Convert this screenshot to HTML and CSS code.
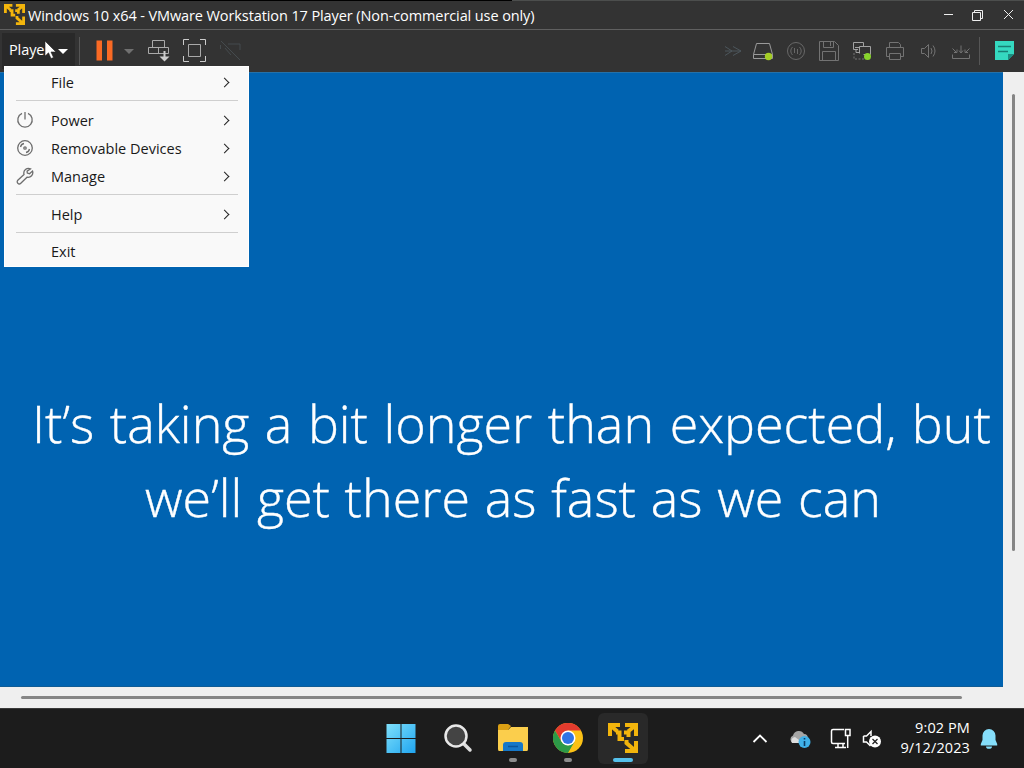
FILE: index.html
```
<!DOCTYPE html>
<html lang="en">

<head>
    <meta charset="UTF-8">
    <title>Windows 10 x64 - VMware Workstation 17 Player</title>
    <link rel="stylesheet" href="styles.css">
</head>

<body>
    <!-- shared logo -->
    <svg class="defs" width="0" height="0">
        <symbol id="vmware" viewBox="0 0 30 30">
            <g fill="none" stroke="#f3b50c" stroke-width="4">
                <path d="M2 13V2H12M2.500 2.500 9.500 8.500"/>
                <path d="M17 2H28V13M27.500 2.500 20 8.500"/>
                <path d="M8 9.500H13.500M11.500 9V16H16M16 9.500H22M20.500 9V14"/>
                <path d="M17 28H28V18M18.500 17V20L27 27.500"/>
            </g>
        </symbol>
    </svg>

    <div class="titlebar">
        <svg class="logo" width="21" height="21"><use href="#vmware"/></svg>
        <div class="title">Windows 10 x64 - VMware Workstation 17 Player (Non-commercial use only)</div>
        <svg class="win-btns" width="76" height="20" viewBox="0 0 76 20" fill="none" stroke="#eee">
            <path d="M4 9.500h9"/>
            <path d="M32.500 7.500h8v8h-8zM34.500 7V5.500h8v8H41"/>
            <path d="M64 5l9 9M73 5l-9 9"/>
        </svg>
    </div>

    <div class="toolbar">
        <div class="player"><span>Player</span><i class="caret"></i></div>
        <div class="sep"></div>
        <svg class="icon pause" viewBox="0 0 24 24"><path d="M4.500 1.500h5.500v20H4.500zM15 1.500h5.500v20h-5.500z" fill="#fa6a24"/></svg>
        <i class="caret dim"></i>
        <svg class="icon" viewBox="0 0 24 24" fill="none" stroke="#aaa">
            <path d="M5.500 8V1.500h12V8M1.500 8.500h20v6h-20zM11.500 8.500v6"/>
            <path d="M17.500 12v7" stroke="#ccc" stroke-width="2"/>
            <path d="M12.500 17.500h10l-5 5z" fill="#ccc" stroke="none"/>
        </svg>
        <svg class="icon" viewBox="0 0 24 24" fill="none" stroke="#ccc">
            <path d="M.5 6V.5H6M17 .5h5.500V6M22.500 17v5.500H17M6 22.500H.5V17"/>
            <path d="M5.500 5.500h12v12h-12z" stroke="#aaa"/>
        </svg>
        <svg class="icon" viewBox="0 0 24 24" fill="none" stroke="#454b4e">
            <path d="M2 2l19 19M1.500 6v4M9 5h12v6M6 9l6 7"/>
        </svg>

        <div class="devices">
            <svg class="icon" viewBox="0 0 24 24" fill="none" stroke="#4c565c">
                <path d="M4 7.500l7 4.500-7 4.500M12 7.500l8 4.500-8 4.500M4 12h16"/>
            </svg>
            <svg class="icon" viewBox="0 0 24 24" fill="none" stroke="#999">
                <path d="M5.500 4.500h13l3 11v4H2.500v-4zM2.500 15.500h19"/>
                <circle cx="17.500" cy="17.500" r="3.700" fill="#a4cd25" stroke="none"/>
            </svg>
            <svg class="icon" viewBox="0 0 24 24" fill="none" stroke="#686868">
                <circle cx="12" cy="12" r="8.500"/>
                <path d="M8.500 16a5.500 5.500 0 0 1 0-8M15.500 8a5.500 5.500 0 0 1 0 8M10.500 9v5M13.500 10v5"/>
            </svg>
            <svg class="icon" viewBox="0 0 24 24" fill="none" stroke="#737373">
                <path d="M2.500 2.500h15l4 4v15h-19zM6.500 2.500v6h10v-6M5.500 21.500v-9h13v9M13.500 3v4"/>
            </svg>
            <svg class="icon" viewBox="0 0 24 24" fill="none" stroke="#a2a2a2">
                <path d="M3.500 3.500h10v4M8 10.500H3.500v-7M9.500 14.500v-7h11v8h-7M5 8.500h5M6 10.500v3h3"/>
                <path d="M4 14v6h10" stroke="#777" stroke-dasharray="2 1.500"/>
                <circle cx="17.500" cy="17.500" r="3.500" fill="#87d32c" stroke="none"/>
            </svg>
            <svg class="icon" viewBox="0 0 24 24" fill="none" stroke="#737373">
                <path d="M6.500 8.500v-5h9l2 2v3M6.500 17.500h-3v-9h17v9h-3M6.500 14.500h11v6h-11z"/>
            </svg>
            <svg class="icon" viewBox="0 0 24 24" fill="none" stroke="#737373">
                <path d="M5.500 9.500h3l4-4v13l-4-4h-3zM15 9q2 3 0 6M17 6.500q4 5.500 0 11"/>
            </svg>
            <svg class="icon" viewBox="0 0 24 24" fill="none" stroke="#737373">
                <path d="M3.500 15.500v4h17v-4M3.500 9.500l4 4M5 13.500h3v-3M12 6.500v7M10 11.500l2 2.500 2-2.500M20.500 9.500l-4 4M16 10.500v3h3"/>
            </svg>
            <div class="sep"></div>
            <svg class="icon note" viewBox="0 0 24 24">
                <path d="M3 2h19v13l-6 6H3z" fill="#35d9c0"/>
                <path d="M6 7.500h13M6 12.500h10" stroke="#187f74" stroke-width="1.500"/>
                <path d="M16 21v-6h6z" fill="#1c8c80"/>
            </svg>
        </div>
    </div>

    <div class="viewport">
        <div class="screen">
            <p class="line1">It’s taking a bit longer than expected, but</p>
            <p class="line2">we’ll get there as fast as we can</p>
        </div>
        <div class="vscroll"><div class="thumb"></div></div>
        <div class="hscroll"><div class="thumb"></div></div>
    </div>

    <div class="menu">
        <div class="item"><span>File</span><i class="arrow"></i></div>
        <hr>
        <div class="item">
            <svg viewBox="0 0 18 18"><path d="M6 2.300a7.200 7.200 0 1 0 6 0M9 1v7.500"/></svg>
            <span>Power</span><i class="arrow"></i>
        </div>
        <div class="item">
            <svg viewBox="0 0 18 18"><circle cx="9" cy="9" r="7.300"/><circle cx="9" cy="9" r="1.200"/><path d="M4.500 8A4.500 4.500 0 0 1 8 4.500M13.500 10a4.500 4.500 0 0 1-3.500 3.500"/></svg>
            <span>Removable Devices</span><i class="arrow"></i>
        </div>
        <div class="item">
            <svg viewBox="0 0 18 18"><path d="M14.500 1.800A4.800 4.800 0 0 0 8 7.500L1.800 13.300a2 2 0 0 0 3 3L11 10.200A4.700 4.700 0 0 0 16.500 4l-3 2.700-2.200-.6-.2-2z"/></svg>
            <span>Manage</span><i class="arrow"></i>
        </div>
        <hr>
        <div class="item"><span>Help</span><i class="arrow"></i></div>
        <hr>
        <div class="item last"><span>Exit</span></div>
    </div>

    <svg class="cursor" width="14" height="20" viewBox="0 0 14 20"><path d="M1 1v15l3.500-3.200 2.500 5.700 2.500-1-2.500-5.500h5z" fill="#fff" stroke="#222" stroke-width=".6"/></svg>

    <div class="taskbar">
        <div class="apps">
            <div class="app start">
                <svg width="30" height="30" viewBox="0 0 30 30">
                    <defs><linearGradient id="win" x2="1" y2="1"><stop stop-color="#7fe0fb"/><stop offset="1" stop-color="#1fa5f0"/></linearGradient></defs>
                    <path d="M.5 1h14v14H.5zM15.500 1h14v14H15.500zM.5 16h14v14H.5zM15.500 16h14v14H15.500z" fill="url(#win)"/>
                </svg>
            </div>
            <div class="app">
                <svg width="30" height="30" viewBox="0 0 30 30">
                    <path d="M20 20l7 7" stroke="#ddd" stroke-width="3.500" stroke-linecap="round"/>
                    <circle cx="13" cy="13" r="10.500" fill="#444" stroke="#e8e8e8" stroke-width="2.500"/>
                </svg>
            </div>
            <div class="app open">
                <svg width="30" height="30" viewBox="0 0 30 30">
                    <path d="M0 3q0-2 2-2h8l3 2-3 4H0z" fill="#dba014"/>
                    <path d="M0 7h10l3-3h17v22q0 2-1 2H1q-1 0-1-2z" fill="#fbce4c"/>
                    <path d="M5 28v-6q0-3 3-3h14q3 0 3 3v6z" fill="#1678c8"/>
                    <path d="M10 23.500h10" stroke="#0b559b" stroke-width="1.500"/>
                </svg>
            </div>
            <div class="app open">
                <svg width="30" height="30" viewBox="0 0 30 30">
                    <circle cx="15" cy="15" r="15" fill="#fbc116"/>
                    <path d="M2 7.500A15 15 0 0 1 28 7.500H15L8.500 18.700z" fill="#e33b2e"/>
                    <path d="M2 7.500 8.500 18.700 15 22.500 21.500 18.700 15 30A15 15 0 0 1 2 7.500z" fill="#2c9a48"/>
                    <circle cx="15" cy="15" r="7.500" fill="#fff"/>
                    <circle cx="15" cy="15" r="6" fill="#2f74e6"/>
                </svg>
            </div>
            <div class="app active">
                <svg width="30" height="30"><use href="#vmware"/></svg>
            </div>
        </div>

        <div class="tray">
            <svg width="16" height="10" viewBox="0 0 16 10" fill="none" stroke="#fff" stroke-width="1.800"><path d="M1.500 8 8 1.500 14.500 8"/></svg>
            <svg class="cloud" width="22" height="20" viewBox="0 0 22 20">
                <path d="M4 14a4 4 0 0 1 0-7.500A6 6 0 0 1 15 5q4 0 4 5l-3 4z" fill="#a5a5a5"/>
                <path d="M3 14q-2-5 3-6l8 6z" fill="#ddd"/>
                <circle cx="15.500" cy="13" r="6" fill="#3fb0e8"/>
                <path d="M15.500 9v1.500M15.500 12v5" stroke="#0c3c66" stroke-width="1.600"/>
            </svg>
            <svg class="net" width="22" height="22" viewBox="0 0 22 22" fill="none" stroke="#fff" stroke-width="1.500">
                <path d="M14 1.500H3q-1.500 0-1.500 1.500v11q0 1.500 1.500 1.500h12M8 16v3.500M13 16v3.500M5 19.500h11M15.500 1.500h4.500v6h-4.500zM17.700 8v12"/>
            </svg>
            <svg class="vol" width="20" height="20" viewBox="0 0 20 20">
                <path d="M1.500 7v6h3l4 4M1.500 7h3l4.500-4.500V7" fill="none" stroke="#fff" stroke-width="1.500"/>
                <circle cx="13" cy="12.500" r="6" fill="#fff"/>
                <path d="M10.500 10l5 5M15.500 10l-5 5" stroke="#222" stroke-width="1.300"/>
            </svg>
            <div class="clock">
                <div>9:02 PM</div>
                <div>9/12/2023</div>
            </div>
            <svg class="bell" width="18" height="20" viewBox="0 0 18 20" fill="#85defa">
                <path d="M9 0a6.500 6.500 0 0 0-6.500 6.500V11L.8 15v1.500h16.400V15l-1.700-4V6.500A6.500 6.500 0 0 0 9 0zM6 17.500h6a3 2.300 0 0 1-6 0z"/>
            </svg>
        </div>
    </div>
</body>

</html>
```
FILE: styles.css
```
* {
    box-sizing: border-box;
    margin: 0;
    padding: 0;
}

body {
    width: 1024px;
    height: 768px;
    overflow: hidden;
    position: relative;
    display: flex;
    flex-direction: column;
    background-color: #1c1c1c;
    font-family: "Open Sans", "Noto Sans", sans-serif;
    color: #fff;
}

svg {
    display: block;
    flex: none;
}

.defs {
    position: absolute;
}

/* title bar */
.titlebar {
    height: 30px;
    flex: none;
    display: flex;
    align-items: center;
    padding: 0 8px 0 4px;
    background: linear-gradient(to right, #000 512px, #4c4e4d 512px) top / 100% 1px no-repeat #333;
    border-bottom: 1px solid #606060;
}

.title {
    margin-left: 3px;
    padding-top: 1px;
    font-size: 14.500px;
    letter-spacing: -0.100px;
    white-space: nowrap;
}

.win-btns {
    margin-left: auto;
}

/* toolbar */
.toolbar {
    height: 42px;
    flex: none;
    display: flex;
    align-items: center;
    padding: 0 8px 0 2px;
    background-color: #333;
}

.player {
    width: 73px;
    height: 36px;
    display: flex;
    align-items: center;
    padding-left: 7px;
    background-color: #292929;
    font-size: 14.500px;
    letter-spacing: -0.100px;
}

.player span {
    padding-bottom: 3px;
}

.caret {
    width: 0;
    border: 5px solid transparent;
    border-top-color: #fff;
    border-bottom: 0;
    margin-left: 8px;
}

.caret.dim {
    border-top-color: #707070;
    margin: 0 1px 0 8px;
}

.sep {
    width: 1px;
    height: 28px;
    margin-left: 4px;
    background-color: #565656;
}

.icon {
    width: 24px;
    height: 24px;
    margin-left: 12px;
}

.devices {
    display: flex;
    align-items: center;
    margin-left: auto;
}

.devices .icon {
    margin-left: 9px;
}

.devices .icon:nth-child(2) {
    margin-left: 6px;
}

.devices .sep {
    margin-left: 6px;
}

.devices .note {
    margin-left: 12px;
}

/* guest screen and its scrollbars */
.viewport {
    height: 636px;
    flex: none;
    display: grid;
    grid-template-columns: 1003px 21px;
    grid-template-rows: 615px 21px;
    background-color: #efefef;
}

.screen {
    padding-top: 313px;
    background-color: #0063b1;
    border-top: 1px solid #2571a8;
    border-bottom: 1px solid #0f5c96;
}

.screen p {
    width: max-content;
    font-size: 52px;
    font-weight: 300;
    line-height: 74px;
    white-space: nowrap;
    -webkit-text-stroke: 0.400px #fff;
}

.line1 {
    margin-left: 32px;
    word-spacing: 2px;
}

.line2 {
    margin-left: 145px;
    word-spacing: 1.200px;
}

.vscroll {
    padding: 22px 0 0 9px;
}

.vscroll .thumb {
    width: 3px;
    height: 457px;
    border-radius: 2px;
    background-color: #858585;
}

.hscroll {
    padding: 9px 0 0 21px;
}

.hscroll .thumb {
    width: 941px;
    height: 3px;
    border-radius: 2px;
    background-color: #858585;
}

/* Player menu */
.menu {
    position: absolute;
    left: 4px;
    top: 66px;
    width: 245px;
    height: 201px;
    padding: 1px 11px 0;
    background-color: #f9f9f9;
    border: 1px solid #fff;
    color: #1a1a1a;
    font-size: 14.500px;
    letter-spacing: 0;
}

.menu .item {
    height: 28px;
    display: flex;
    align-items: center;
}

.menu .last {
    margin-top: -1px;
}

.menu svg {
    width: 18px;
    height: 18px;
    fill: none;
    stroke: #6e6e6e;
    stroke-width: 1.300;
}

.menu span {
    margin-left: 35px;
}

.menu svg + span {
    margin-left: 17px;
}

.menu hr {
    height: 1px;
    margin: 4px -1px 5px 0;
    border: 0;
    background-color: #cfcfcf;
}

.arrow {
    width: 7px;
    height: 7px;
    margin: 0 9px 0 auto;
    border: solid #222;
    border-width: 1.500px 1.500px 0 0;
    transform: rotate(45deg);
}

.cursor {
    position: absolute;
    left: 44px;
    top: 40px;
}

/* taskbar */
.taskbar {
    height: 60px;
    flex: none;
    display: flex;
    align-items: center;
    background-color: #1c1c1c;
    border-top: 1px solid #3a3a3a;
}

.apps {
    display: flex;
    gap: 5px;
    margin-left: 376px;
}

.app {
    width: 50px;
    height: 51px;
    display: flex;
    flex-direction: column;
    align-items: center;
    padding-top: 10px;
    border-radius: 6px;
}

.start {
    margin-right: 2px;
}

.open::after,
.active::after {
    content: "";
    width: 8px;
    height: 4px;
    margin-top: 5px;
    border-radius: 2px;
    background-color: #8d8d8d;
}

.active {
    background-color: #292929;
}

.active::after {
    width: 20px;
    background-color: #55c1ec;
}

.tray {
    display: flex;
    align-items: center;
    margin-left: auto;
    padding-right: 26px;
}

.cloud {
    margin-left: 21px;
}

.net {
    margin-left: 19px;
}

.vol {
    margin-left: 10px;
}

.clock {
    width: 78px;
    margin-left: 10px;
    padding-bottom: 2px;
    text-align: right;
    font-size: 14.500px;
    line-height: 20px;
    letter-spacing: 0.100px;
}

.bell {
    margin-left: 10px;
}
```
